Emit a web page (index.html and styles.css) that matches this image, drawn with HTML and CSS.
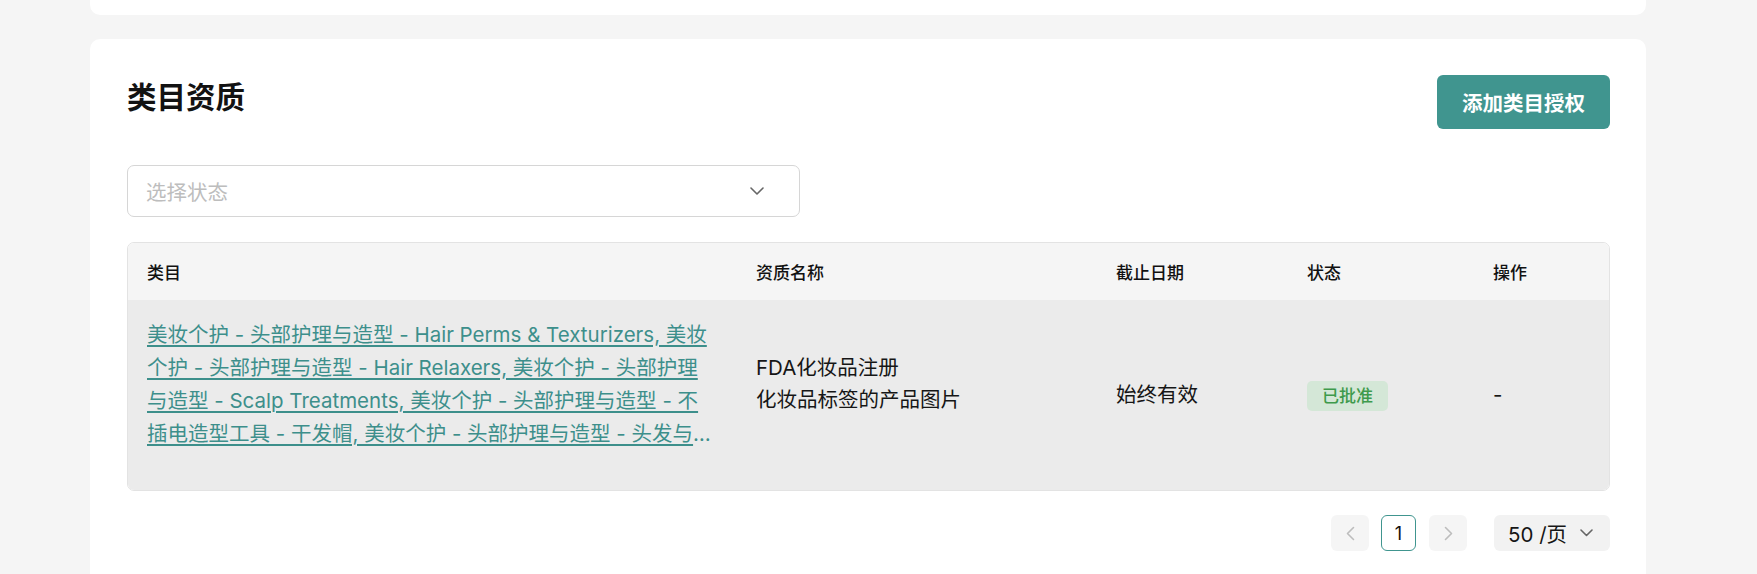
FILE: index.html
```html
<!DOCTYPE html>
<html lang="zh-CN">
<head>
<meta charset="utf-8">
<title>类目资质</title>
<link rel="stylesheet" href="styles.css">
</head>
<body>
<div class="page">
  <div class="card card-top"></div>
  <div class="card card-main">
    <div class="head">
      <h2 class="title">类目资质</h2>
      <button class="btn-primary">添加类目授权</button>
    </div>
    <div class="select">
      <span class="placeholder">选择状态</span>
      <svg class="chev" width="14" height="8" viewBox="0 0 14 8"><polyline points="1,1 7,7 13,1" fill="none" stroke="#666" stroke-width="1.6" stroke-linecap="round" stroke-linejoin="round"/></svg>
    </div>
    <div class="table-wrap">
      <table class="tbl">
        <colgroup>
          <col class="c1"><col class="c2"><col class="c3"><col class="c4"><col class="c5">
        </colgroup>
        <thead>
          <tr><th>类目</th><th>资质名称</th><th>截止日期</th><th>状态</th><th>操作</th></tr>
        </thead>
        <tbody>
          <tr>
            <td><div class="cat"><a class="cat-link" href="#">美妆个护 - 头部护理与造型 - Hair Perms &amp; Texturizers, 美妆个护 - 头部护理与造型 - Hair Relaxers, 美妆个护 - 头部护理与造型 - Scalp Treatments, 美妆个护 - 头部护理与造型 - 不插电造型工具 - 干发帽, 美妆个护 - 头部护理与造型 - 头发与头皮护理 - 护发素, 美妆个护 - 头部护理与造型 - 头发与头皮护理 - 洗发水</a></div></td>
            <td><div class="quals"><div>FDA化妆品注册</div><div>化妆品标签的产品图片</div></div></td>
            <td>始终有效</td>
            <td><span class="badge">已批准</span></td>
            <td>-</td>
          </tr>
        </tbody>
      </table>
    </div>
    <div class="pager">
      <button class="pg-btn pg-arrow" aria-label="上一页"><svg width="9" height="15" viewBox="0 0 9 15"><polyline points="7.5,1.5 1.5,7.5 7.5,13.5" fill="none" stroke="#bdbdbd" stroke-width="1.6" stroke-linecap="round" stroke-linejoin="round"/></svg></button>
      <button class="pg-btn pg-num">1</button>
      <button class="pg-btn pg-arrow" aria-label="下一页"><svg width="9" height="15" viewBox="0 0 9 15"><polyline points="1.5,1.5 7.5,7.5 1.5,13.5" fill="none" stroke="#bdbdbd" stroke-width="1.6" stroke-linecap="round" stroke-linejoin="round"/></svg></button>
      <div class="pg-size"><span>50 /页</span><svg width="13" height="8" viewBox="0 0 13 8"><polyline points="1,1 6.5,6.5 12,1" fill="none" stroke="#666" stroke-width="1.6" stroke-linecap="round" stroke-linejoin="round"/></svg></div>
    </div>
  </div>
</div>
</body>
</html>
```
FILE: styles.css
```css
* { box-sizing: border-box; }
html, body {
  margin: 0;
  padding: 0;
  background: #f5f5f5;
  font-family: Inter, "Noto Sans CJK SC", sans-serif;
  color: #161616;
  overflow: hidden;
}
.page {
  display: flex;
  flex-direction: column;
  gap: 24px;
  padding: 0 111px 0 90px;
}
.card {
  background: #fff;
  border-radius: 10px;
}
.card-top {
  height: 15px;
  border-radius: 0 0 10px 10px;
}
.card-main {
  padding: 36px 36px 40px 37px;
}
.head {
  display: flex;
  justify-content: space-between;
  align-items: flex-start;
}
.title {
  margin: 0;
  font-size: 29.5px;
  line-height: 44px;
  font-weight: 700;
  color: #121212;
}
.btn-primary {
  height: 54px;
  padding: 0 25px;
  border: none;
  border-radius: 6px;
  background: #40958f;
  color: #fff;
  font-family: inherit;
  font-size: 20.5px;
  font-weight: 600;
}
.select {
  margin-top: 36px;
  width: 673px;
  height: 52px;
  border: 1px solid #d6d6d6;
  border-radius: 7px;
  display: flex;
  align-items: center;
  justify-content: space-between;
  padding: 0 35px 0 18px;
}
.placeholder {
  font-size: 20.5px;
  color: #bdbdbd;
}
.table-wrap {
  margin-top: 25px;
  border: 1px solid #e3e3e3;
  border-radius: 7px;
  overflow: hidden;
}
.tbl {
  width: 100%;
  border-collapse: collapse;
  table-layout: fixed;
}
.c1 { width: 609px; }
.c2 { width: 360px; }
.c3 { width: 191px; }
.c4 { width: 186px; }
.c5 { width: auto; }
.tbl th {
  height: 57px;
  padding: 0 19px;
  background: #f5f5f5;
  text-align: left;
  font-size: 17px;
  font-weight: 500;
  color: #111;
}
.tbl td {
  background: #ebebeb;
  padding: 18px 19px;
  vertical-align: middle;
  font-size: 20.5px;
  line-height: 32px;
  color: #161616;
}
.cat {
  margin-bottom: 22px;
  display: -webkit-box;
  -webkit-box-orient: vertical;
  -webkit-line-clamp: 4;
  overflow: hidden;
  line-height: 33px;
  color: #3d8f8b;
}
.cat-link {
  color: #3d8f8b;
  text-decoration: underline;
  text-decoration-thickness: 1.5px;
  text-underline-offset: 3px;
}
.quals {
  margin-bottom: 22px;
}
.badge {
  display: inline-block;
  height: 30px;
  line-height: 30px;
  padding: 0 15px;
  border-radius: 5px;
  background: #d4e7d7;
  color: #3e9a4c;
  font-size: 17px;
  font-weight: 500;
}
.pager {
  margin-top: 24px;
  display: flex;
  justify-content: flex-end;
  align-items: center;
}
.pg-btn {
  height: 36px;
  border-radius: 6px;
  font-family: inherit;
  display: flex;
  align-items: center;
  justify-content: center;
  padding: 0;
}
.pg-arrow {
  width: 38px;
  border: none;
  background: #f5f5f5;
}
.pg-num {
  width: 35px;
  margin: 0 13px 0 12px;
  border: 1px solid #40958f;
  background: #fff;
  color: #111;
  font-size: 18px;
  font-weight: 400;
}
.pg-size {
  margin-left: 27px;
  width: 116px;
  height: 36px;
  border-radius: 6px;
  background: #f2f2f2;
  display: flex;
  align-items: center;
  gap: 13px;
  padding-left: 14px;
  font-size: 20.5px;
  color: #161616;
}
```
